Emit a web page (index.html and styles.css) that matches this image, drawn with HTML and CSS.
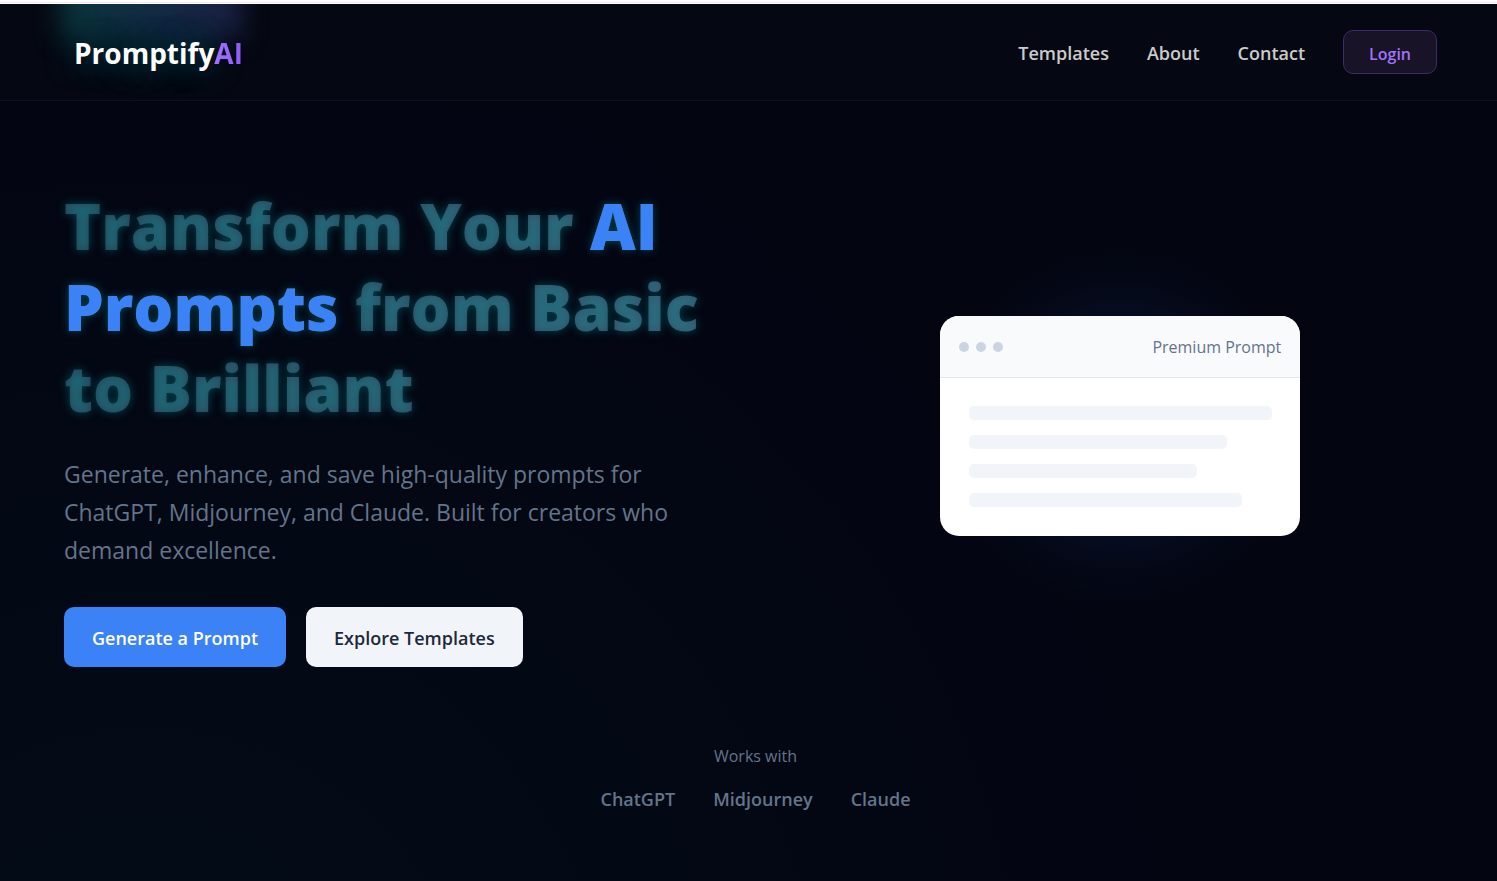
FILE: index.html
```html
<!DOCTYPE html>
<html lang="en">
<head>
<meta charset="utf-8">
<meta name="viewport" content="width=device-width, initial-scale=1">
<title>Promptify AI</title>
<link rel="stylesheet" href="styles.css">
</head>
<body>
<div class="top-strip"></div>
<header class="header">
  <a class="logo" href="#">Promptify<span class="logo-accent">AI</span></a>
  <nav class="nav">
    <a class="nav-link" href="#templates">Templates</a>
    <a class="nav-link" href="#about">About</a>
    <a class="nav-link" href="#contact">Contact</a>
    <button class="login" type="button">Login</button>
  </nav>
</header>
<main class="page">
  <section class="hero">
    <div class="hero-text">
      <h1 class="title">Transform Your <span class="highlight">AI Prompts</span> from Basic to Brilliant</h1>
      <p class="lead">Generate, enhance, and save high-quality prompts for ChatGPT, Midjourney, and Claude. Built for creators who demand excellence.</p>
      <div class="actions">
        <button class="btn btn-primary" type="button">Generate a Prompt</button>
        <button class="btn btn-secondary" type="button">Explore Templates</button>
      </div>
    </div>
    <div class="hero-visual">
      <div class="card">
        <div class="card-head">
          <div class="dots"><span class="dot"></span><span class="dot"></span><span class="dot"></span></div>
          <span class="card-title">Premium Prompt</span>
        </div>
        <div class="card-body">
          <div class="line line-full"></div>
          <div class="line line-long"></div>
          <div class="line line-short"></div>
          <div class="line line-medium"></div>
        </div>
      </div>
    </div>
  </section>
  <section class="works">
    <p class="works-label">Works with</p>
    <div class="works-list">
      <span>ChatGPT</span>
      <span>Midjourney</span>
      <span>Claude</span>
    </div>
  </section>
</main>
</body>
</html>
```
FILE: styles.css
```css
* {
  box-sizing: border-box;
}

body {
  margin: 0;
  min-height: 100vh;
  display: flex;
  flex-direction: column;
  background: radial-gradient(circle at 10% 120%, #030c18 0, #030a15 360px, #030612 900px, #030511 1100px);
  color: #64748b;
  font-family: "Open Sans", "Noto Sans", sans-serif;
}

.top-strip {
  height: 4px;
  background: linear-gradient(#fff 2px, #fae4ea 2px, #fae4ea 3px, #fff 3px);
}

.header {
  position: relative;
  overflow: hidden;
  display: flex;
  align-items: center;
  justify-content: space-between;
  height: 97px;
  padding: 0 60px 0 74px;
  background: #050812;
  border-bottom: 1px solid #0e111b;
}

.header::before {
  content: "";
  position: absolute;
  left: 60px;
  top: -30px;
  width: 182px;
  height: 64px;
  background: linear-gradient(90deg, #0a3439, #122b44 50%, #191f42);
  filter: blur(12px);
}

.logo {
  position: relative;
  padding-top: 2px;
  color: #fff;
  font-size: 28px;
  font-weight: 700;
  text-decoration: none;
  text-shadow: 0 0 30px rgba(20, 170, 180, 0.6);
}

.logo-accent {
  background: linear-gradient(90deg, #a370ff, #8b5cf6);
  background-clip: text;
  color: transparent;
  text-shadow: none;
}

.nav {
  display: flex;
  align-items: center;
  gap: 38px;
}

.nav-link {
  padding-top: 2px;
  color: #cbcbcb;
  font-size: 18px;
  font-weight: 600;
  text-decoration: none;
}

.login {
  height: 44px;
  padding: 4px 25px 0;
  border: 1px solid #3d2b6b;
  border-radius: 10px;
  background: #181327;
  color: #a173f8;
  font: 600 16px "Open Sans", "Noto Sans", sans-serif;
}

.page {
  padding: 84px 50px 0 64px;
}

.hero {
  display: grid;
  grid-template-columns: 1fr 1fr;
  align-items: center;
  gap: 76px;
}

.title {
  margin: 0 0 27px;
  background: linear-gradient(90deg, #2a3d4f, #3d5066);
  background-clip: text;
  color: transparent;
  font-size: 63px;
  font-weight: 800;
  line-height: 81px;
  text-shadow: 0 0 10px rgba(6, 172, 182, 0.38);
}

.highlight {
  color: #3b82f6;
}

.lead {
  max-width: 620px;
  margin: 0 0 38px;
  font-size: 23px;
  line-height: 38px;
}

.actions {
  display: flex;
  gap: 20px;
}

.btn {
  height: 60px;
  padding: 2px 28px 0;
  border: 0;
  border-radius: 10px;
  font: 600 18px "Open Sans", "Noto Sans", sans-serif;
}

.btn-primary {
  background: #3b82f6;
  color: #fff;
}

.btn-secondary {
  background: #f1f5f9;
  color: #1e293b;
}

.hero-visual {
  display: flex;
  justify-content: center;
  padding: 100px 0;
  background: radial-gradient(circle at center, #071231 0, #060c20 110px, #040715 150px, transparent 180px);
}

.card {
  width: 360px;
  overflow: hidden;
  border-radius: 19px;
  background: #fff;
}

.card-head {
  display: flex;
  align-items: center;
  justify-content: space-between;
  height: 62px;
  padding: 0 19px;
  background: #f8fafc;
  border-bottom: 1px solid #e2e8f0;
}

.dots {
  display: flex;
  gap: 7px;
}

.dot {
  width: 10px;
  height: 10px;
  border-radius: 50%;
  background: #cbd5e1;
}

.card-title {
  font-size: 16px;
  font-weight: 500;
}

.card-body {
  display: grid;
  gap: 15px;
  padding: 28px 28px 29px 29px;
}

.line {
  height: 14px;
  border-radius: 5px;
  background: #f1f5f9;
}

.line-full {
  width: 100%;
}

.line-long {
  width: 85%;
}

.line-short {
  width: 75%;
}

.line-medium {
  width: 90%;
}

.works {
  padding: 77px 0 64px;
  text-align: center;
}

.works-label {
  margin: 0 0 18px;
  font-size: 16px;
  line-height: 24px;
}

.works-list {
  display: flex;
  justify-content: center;
  gap: 38px;
  font-size: 18px;
  font-weight: 600;
  line-height: 26px;
}
```
